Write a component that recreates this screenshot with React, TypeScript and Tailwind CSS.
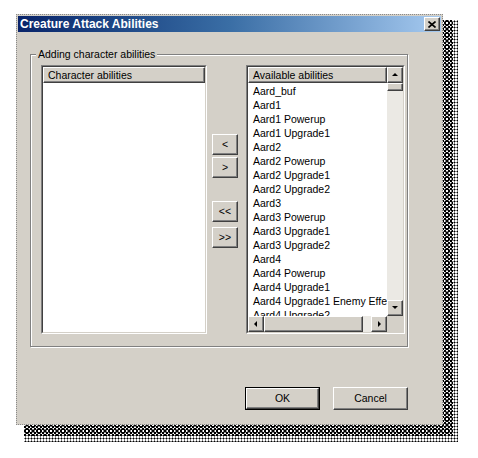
import React from "react";

const items = [
  "Aard_buf",
  "Aard1",
  "Aard1 Powerup",
  "Aard1 Upgrade1",
  "Aard2",
  "Aard2 Powerup",
  "Aard2 Upgrade1",
  "Aard2 Upgrade2",
  "Aard3",
  "Aard3 Powerup",
  "Aard3 Upgrade1",
  "Aard3 Upgrade2",
  "Aard4",
  "Aard4 Powerup",
  "Aard4 Upgrade1",
  "Aard4 Upgrade1 Enemy Effect",
  "Aard4 Upgrade2",
];

const raised =
  "border border-t-white border-l-white border-r-[#404040] border-b-[#404040] shadow-[inset_-1px_-1px_0_#808080] bg-[#d4d0c8]";

function Arrow({ dir }: { dir: "up" | "down" | "left" | "right" }) {
  const pts: Record<string, string> = {
    up: "1,5 4,2 7,5",
    down: "1,2 4,5 7,2",
    left: "5,1 2,4 5,7",
    right: "3,1 6,4 3,7",
  };
  return (
    <svg width="8" height="8" viewBox="0 0 8 8">
      <polygon points={pts[dir]} fill="#000" />
    </svg>
  );
}

function ScrollBtn({ dir }: { dir: "up" | "down" | "left" | "right" }) {
  return (
    <div className={`w-[16px] h-[16px] flex items-center justify-center shrink-0 ${raised}`}>
      <Arrow dir={dir} />
    </div>
  );
}

function SmallBtn({ label }: { label: string }) {
  return (
    <div className={`w-[26px] h-[21px] flex items-center justify-center text-black ${raised}`}>
      {label}
    </div>
  );
}

export default function App() {
  return (
    <div className="w-[478px] h-[458px] bg-white pl-[16px] pt-[14px] font-['Liberation_Sans',Arial,sans-serif] text-[10.5px] leading-none text-black overflow-hidden">
      <div className="relative w-[427px] h-[411px]">
        {/* drop shadow: sparse outer band, dense inner band */}
        <div className="absolute left-[8px] top-[6px] w-[434px] h-[422px] bg-[radial-gradient(circle,#000_0.9px,transparent_1.1px)] bg-[length:3px_3px]" />
        <div className="absolute left-[8px] top-[6px] w-[429px] h-[416px] bg-[conic-gradient(#000_25%,transparent_0_50%,#000_0_75%,transparent_0)] bg-[length:4px_4px]" />
        {/* dialog */}
        <div className="relative w-[427px] h-[411px] bg-[#d4d0c8] border border-dotted border-[#8a8a8a] p-[1px] flex flex-col">
          <div className="h-[16px] bg-gradient-to-r from-[#0a246a] via-[#3a6ea5] to-[#a6caf0] flex items-center pl-[2px] pr-[1px]">
            <span className="text-white font-bold text-[12px] flex-1">Creature Attack Abilities</span>
            <div className={`w-[16px] h-[14px] flex items-center justify-center ${raised}`}>
              <svg width="8" height="7" viewBox="0 0 8 7">
                <path d="M0.5 0.5 L7.5 6.5 M7.5 0.5 L0.5 6.5" stroke="#000" strokeWidth="1.6" />
              </svg>
            </div>
          </div>

          {/* group box */}
          <div className="ml-[12px] mt-[22px] relative w-[378px] h-[293px] border border-[#808080] shadow-[inset_1px_1px_0_#fff,1px_1px_0_#fff] pl-[10px] pt-[10px] flex">
            <span className="absolute left-[5px] -top-[6px] bg-[#d4d0c8] px-[2px]">Adding character abilities</span>

            {/* left list */}
            <div className="w-[166px] h-[269px] border border-t-[#808080] border-l-[#808080] border-r-white border-b-white bg-white">
              <div className="h-full border border-t-[#404040] border-l-[#404040] border-r-[#d4d0c8] border-b-[#d4d0c8]">
                <div className={`h-[16px] flex items-center pl-[4px] ${raised}`}>Character abilities</div>
              </div>
            </div>

            {/* move buttons */}
            <div className="w-[26px] ml-[5px] pt-[69px] flex flex-col">
              <SmallBtn label="<" />
              <div className="h-[2px]" />
              <SmallBtn label=">" />
              <div className="h-[23px]" />
              <SmallBtn label="<<" />
              <div className="h-[5px]" />
              <SmallBtn label=">>" />
            </div>

            {/* right list */}
            <div className="w-[159px] h-[269px] ml-[8px] border border-t-[#808080] border-l-[#808080] border-r-white border-b-white bg-white">
              <div className="h-full flex border border-t-[#404040] border-l-[#404040] border-r-[#d4d0c8] border-b-[#d4d0c8]">
                <div className="flex-1 flex flex-col min-w-0">
                  <div className={`h-[16px] flex items-center pl-[4px] shrink-0 ${raised}`}>Available abilities</div>
                  <div className="flex-1 overflow-hidden pt-[1px]">
                    {items.map((it) => (
                      <div key={it} className="h-[14px] flex items-center pl-[5px] whitespace-nowrap">
                        {it}
                      </div>
                    ))}
                  </div>
                  <div className="h-[16px] flex shrink-0 bg-[#ebe9e4]">
                    <ScrollBtn dir="left" />
                    <div className={`w-[99px] h-[16px] ${raised}`} />
                    <div className="flex-1" />
                    <ScrollBtn dir="right" />
                  </div>
                </div>
                <div className="w-[16px] flex flex-col">
                  <ScrollBtn dir="up" />
                  <div className="flex-1 bg-[#ebe9e4] flex flex-col">
                    <div className={`h-[8px] w-[16px] ${raised}`} />
                  </div>
                  <ScrollBtn dir="down" />
                  <div className="h-[16px] bg-[#d4d0c8]" />
                </div>
              </div>
            </div>
          </div>

          {/* OK / Cancel */}
          <div className="flex ml-[227px] mt-[40px] gap-[13px]">
            <div className="w-[75px] h-[23px] border border-black">
              <div className={`w-full h-full flex items-center justify-center ${raised}`}>OK</div>
            </div>
            <div className={`w-[75px] h-[23px] flex items-center justify-center ${raised}`}>Cancel</div>
          </div>
        </div>
      </div>
    </div>
  );
}
